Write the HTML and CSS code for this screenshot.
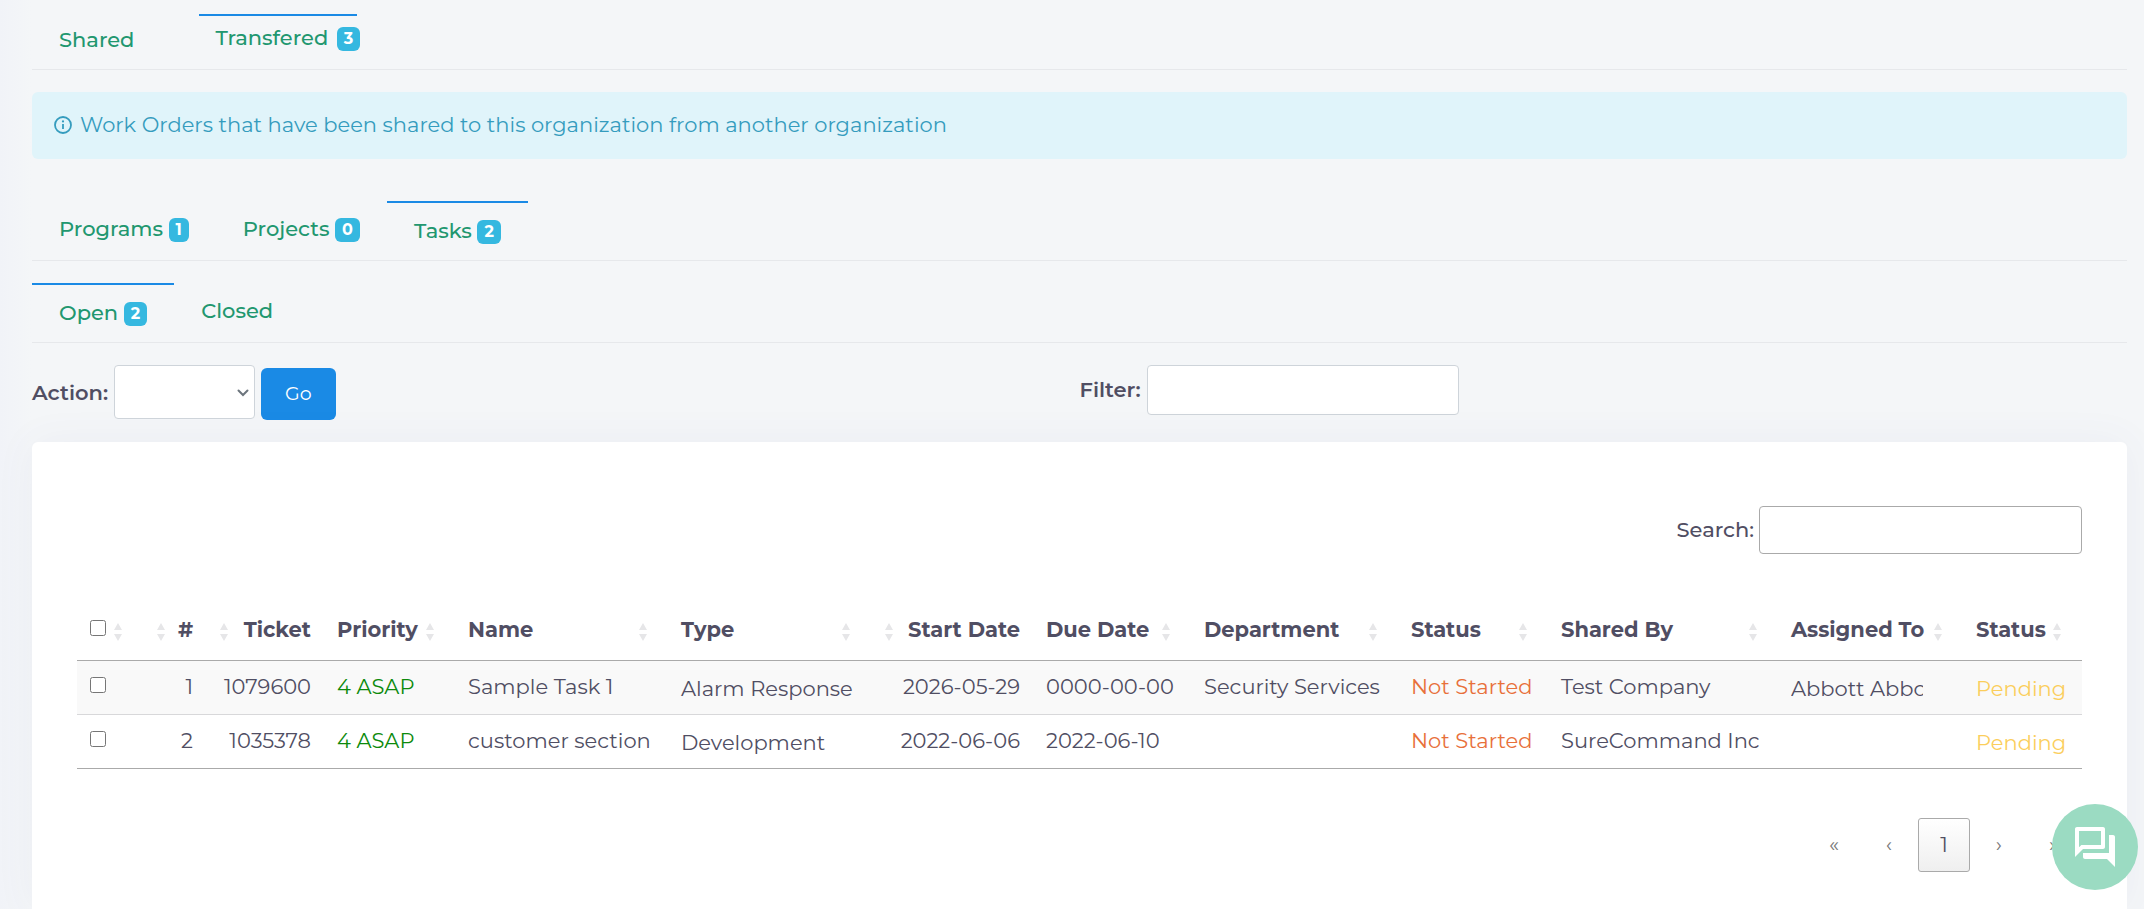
FILE: index.html
```html
<!DOCTYPE html>
<html lang="en">
<head>
    <meta charset="UTF-8">
    <meta name="viewport" content="width=device-width, initial-scale=1.0">
    <title>Work Orders - Transfered</title>
    <link rel="stylesheet" href="styles.css">
</head>
<body>

<div class="container">
    <nav class="tabs tabs-main">
        <a class="tab" href="#shared">Shared</a>
        <a class="tab active" href="#transfered">Transfered <span class="badge">3</span></a>
    </nav>

    <div class="alert">
        <svg class="info-icon" viewBox="0 0 18 18" aria-hidden="true">
            <circle cx="9" cy="9" r="8" fill="none" stroke="currentColor" stroke-width="1.8"/>
            <path d="M9 8v5" stroke="currentColor" stroke-width="1.8"/>
            <circle cx="9" cy="5.4" r="1.1" fill="currentColor"/>
        </svg>
        <span>Work Orders that have been shared to this organization from another organization</span>
    </div>

    <nav class="tabs">
        <a class="tab" href="#programs">Programs <span class="badge">1</span></a>
        <a class="tab" href="#projects">Projects <span class="badge">0</span></a>
        <a class="tab active" href="#tasks">Tasks <span class="badge">2</span></a>
    </nav>

    <nav class="tabs tabs-state">
        <a class="tab active" href="#open">Open <span class="badge">2</span></a>
        <a class="tab" href="#closed">Closed</a>
    </nav>

    <!-- Bulk action and filter -->
    <form class="toolbar">
        <div class="toolbar-group">
            <label class="action-label" for="action">Action:</label>
            <div class="select-wrap">
                <select id="action" name="action">
                    <option value=""></option>
                </select>
                <svg class="chevron" viewBox="0 0 12 8" aria-hidden="true">
                    <path d="M1.5 1.5L6 6l4.500-4.500" fill="none" stroke="currentColor" stroke-width="2" stroke-linecap="round"/>
                </svg>
            </div>
            <button class="go" type="button">Go</button>
        </div>
        <div class="toolbar-group">
            <label for="filter">Filter:</label>
            <input id="filter" name="filter" type="text">
        </div>
    </form>

    <main class="card">
        <div class="search">
            <label for="search">Search:</label>
            <input id="search" name="search" type="search">
        </div>

        <table>
            <colgroup>
                <col class="col-check">
                <col class="col-num">
                <col class="col-ticket">
                <col class="col-priority">
                <col class="col-name">
                <col class="col-type">
                <col class="col-start">
                <col class="col-due">
                <col class="col-dept">
                <col class="col-status">
                <col class="col-shared">
                <col class="col-assigned">
                <col class="col-approval">
            </colgroup>
            <thead>
                <tr>
                    <th><input type="checkbox" aria-label="Select all"></th>
                    <th class="right">#</th>
                    <th class="right">Ticket</th>
                    <th>Priority</th>
                    <th>Name</th>
                    <th>Type</th>
                    <th class="right">Start Date</th>
                    <th>Due Date</th>
                    <th>Department</th>
                    <th>Status</th>
                    <th>Shared By</th>
                    <th>Assigned To</th>
                    <th>Status</th>
                </tr>
            </thead>
            <tbody>
                <tr>
                    <td><input type="checkbox" aria-label="Select ticket 1079600"></td>
                    <td class="right">1</td>
                    <td class="right">1079600</td>
                    <td class="priority">4 ASAP</td>
                    <td>Sample Task 1</td>
                    <td class="editable">Alarm Response</td>
                    <td class="right">2026-05-29</td>
                    <td>0000-00-00</td>
                    <td>Security Services</td>
                    <td class="not-started">Not Started</td>
                    <td>Test Company</td>
                    <td class="editable"><div class="assigned">Abbott Abbott</div></td>
                    <td class="editable pending">Pending</td>
                </tr>
                <tr>
                    <td><input type="checkbox" aria-label="Select ticket 1035378"></td>
                    <td class="right">2</td>
                    <td class="right">1035378</td>
                    <td class="priority">4 ASAP</td>
                    <td>customer section</td>
                    <td class="editable">Development</td>
                    <td class="right">2022-06-06</td>
                    <td>2022-06-10</td>
                    <td></td>
                    <td class="not-started">Not Started</td>
                    <td>SureCommand Inc</td>
                    <td></td>
                    <td class="editable pending">Pending</td>
                </tr>
            </tbody>
        </table>

        <div class="pagination">
            <button type="button" aria-label="First">«</button>
            <button type="button" aria-label="Previous">‹</button>
            <button class="current" type="button">1</button>
            <button type="button" aria-label="Next">›</button>
            <button type="button" aria-label="Last">»</button>
        </div>
    </main>
</div>

<button class="chat" type="button" aria-label="Chat">
    <svg viewBox="0 0 24 24" aria-hidden="true">
        <path fill="currentColor" d="M15 4v7H5.170L4 12.170V4h11m1-2H3c-.55 0-1 .45-1 1v14l4-4h10c.55 0 1-.45 1-1V3c0-.55-.45-1-1-1zm5 4h-2v9H6v2c0 .55.45 1 1 1h11l4 4V7c0-.55-.45-1-1-1z"/>
    </svg>
</button>

</body>
</html>
```
FILE: styles.css
```css
* {
    box-sizing: border-box;
}

body {
    margin: 0;
    font-family: Montserrat, Inter, "Open Sans", sans-serif;
    font-size: 21px;
    line-height: 32px;
    color: #504e63;
    background-color: #f4f6f8;
}

.container {
    display: flex;
    flex-direction: column;
    min-height: 100vh;
    padding: 14px 17px 0 32px;
    background: linear-gradient(to right, #f1f3f8, #f4f6f8 32px);
}

/* Tabs */
.tabs {
    display: flex;
    align-items: flex-start;
    height: 60px;
    border-bottom: 1px solid #e6e8eb;
}

.tab {
    padding: 12px 27px;
    font-weight: 500;
    color: #21976f;
    text-decoration: none;
    white-space: nowrap;
}

.tab.active {
    border-top: 2px solid #1a8ae5;
}

.badge {
    display: inline-block;
    padding: 0 7px;
    font-size: 16px;
    font-weight: 700;
    line-height: 24px;
    color: #fff;
    vertical-align: 1px;
    background-color: #35b8e0;
    border-radius: 6px;
}

.tabs-main {
    height: 56px;
    gap: 66px;
}

.tabs-main .tab {
    padding: 10px 0 8px 27px;
}

.tabs-main .tab.active {
    width: 158px;
    padding: 6px 0 6px 16px;
}

.tabs-main .tab:first-child {
    margin-right: -1px;
}

.tabs-main .badge {
    margin-left: 3px;
}

.tabs-state {
    margin-top: 22px;
}

/* Notice */
.alert {
    display: flex;
    align-items: center;
    gap: 8px;
    margin: 22px 0 42px;
    padding: 17px 22px 18px;
    color: #359cbe;
    background-color: #e0f4fa;
    border-radius: 6px;
}

.info-icon {
    width: 18px;
    height: 18px;
}

/* Toolbar */
.toolbar {
    display: grid;
    grid-template-columns: 1fr 1fr;
    margin: 22px 0;
}

.toolbar-group {
    display: flex;
    align-items: flex-start;
    gap: 6px;
}

.toolbar label {
    padding-top: 9px;
    font-weight: 600;
}

.toolbar .action-label {
    padding-top: 12px;
}

.select-wrap {
    position: relative;
}

select,
input[type="text"],
input[type="search"] {
    font: inherit;
    color: inherit;
    background-color: #fff;
    border: 1px solid #ced4da;
    border-radius: 4px;
}

select {
    display: block;
    width: 141px;
    height: 54px;
    appearance: none;
}

.chevron {
    position: absolute;
    top: 24px;
    right: 6px;
    width: 12px;
    height: 8px;
    color: #6c757d;
}

input[type="text"] {
    width: 312px;
    height: 50px;
}

.go {
    height: 52px;
    margin-top: 3px;
    padding: 0 24px;
    font: inherit;
    font-size: 19px;
    color: #fff;
    background-color: #1a8ae5;
    border: 0;
    border-radius: 6px;
}

/* Table card */
.card {
    flex: 1;
    padding: 64px 45px 37px;
    background-color: #fff;
    border-radius: 6px 6px 0 0;
    box-shadow: 0 0 40px rgba(80, 90, 160, 0.06);
}

.search {
    display: flex;
    justify-content: flex-end;
    gap: 5px;
    margin-bottom: 44px;
}

.search label {
    padding-top: 8px;
    font-weight: 500;
}

input[type="search"] {
    width: 323px;
    height: 48px;
    border-color: #aaa;
}

table {
    width: 100%;
    table-layout: fixed;
    border-collapse: collapse;
    border-bottom: 1px solid #aaa;
}

.col-check { width: 66px; }
.col-num { width: 63px; }
.col-ticket { width: 118px; }
.col-priority { width: 131px; }
.col-name { width: 213px; }
.col-type { width: 203px; }
.col-start { width: 162px; }
.col-due { width: 158px; }
.col-dept { width: 207px; }
.col-status { width: 150px; }
.col-shared { width: 230px; }
.col-assigned { width: 185px; }
.col-approval { width: 119px; }

th,
td {
    padding: 10px 13px 11px;
    text-align: left;
    vertical-align: top;
    white-space: nowrap;
}

th {
    padding: 16px 13px 14px;
    font-weight: 700;
    border-bottom: 1px solid #aaa;
    /* sort arrows */
    background: url("data:image/svg+xml,%3Csvg xmlns='http://www.w3.org/2000/svg' viewBox='0 0 8 18'%3E%3Cpath d='M0 7L4 0L8 7zM0 11H8L4 18z' fill='%23e6e6e8'/%3E%3C/svg%3E") right 21px top 25px / 8px 18px no-repeat;
}

th.right {
    background-position: left 14px top 25px;
}

td {
    border-bottom: 1px solid #d8d8da;
}

tbody tr:first-child {
    background-color: #f9f9f9;
}

tbody tr:last-child td {
    border-bottom-color: #aaa;
}

.right {
    text-align: right;
}

td.editable {
    padding-top: 12px;
    padding-bottom: 9px;
}

.assigned {
    width: 132px;
    overflow: hidden;
}

.priority {
    color: #0c8a0c;
}

.not-started {
    color: #e8703a;
}

.pending {
    color: #fbce5c;
}

input[type="checkbox"] {
    display: block;
    width: 16px;
    height: 16px;
    margin: 6px 0 0;
}

/* Pagination */
.pagination {
    display: flex;
    justify-content: flex-end;
    gap: 3px;
    margin: 49px 2px 0 0;
}

.pagination button {
    width: 52px;
    height: 54px;
    padding: 0;
    font: inherit;
    color: #777;
    background: none;
    border: 1px solid transparent;
    border-radius: 3px;
}

.pagination .current {
    color: #504e63;
    background: linear-gradient(#fff, #efefef);
    border-color: #aaa;
}

/* Floating chat button */
.chat {
    position: fixed;
    right: 6px;
    bottom: 19px;
    display: flex;
    align-items: center;
    justify-content: center;
    width: 86px;
    height: 86px;
    padding: 0;
    color: #fff;
    background-color: #9bdbc2;
    border: 0;
    border-radius: 50%;
}

.chat svg {
    width: 48px;
    height: 48px;
}
```
